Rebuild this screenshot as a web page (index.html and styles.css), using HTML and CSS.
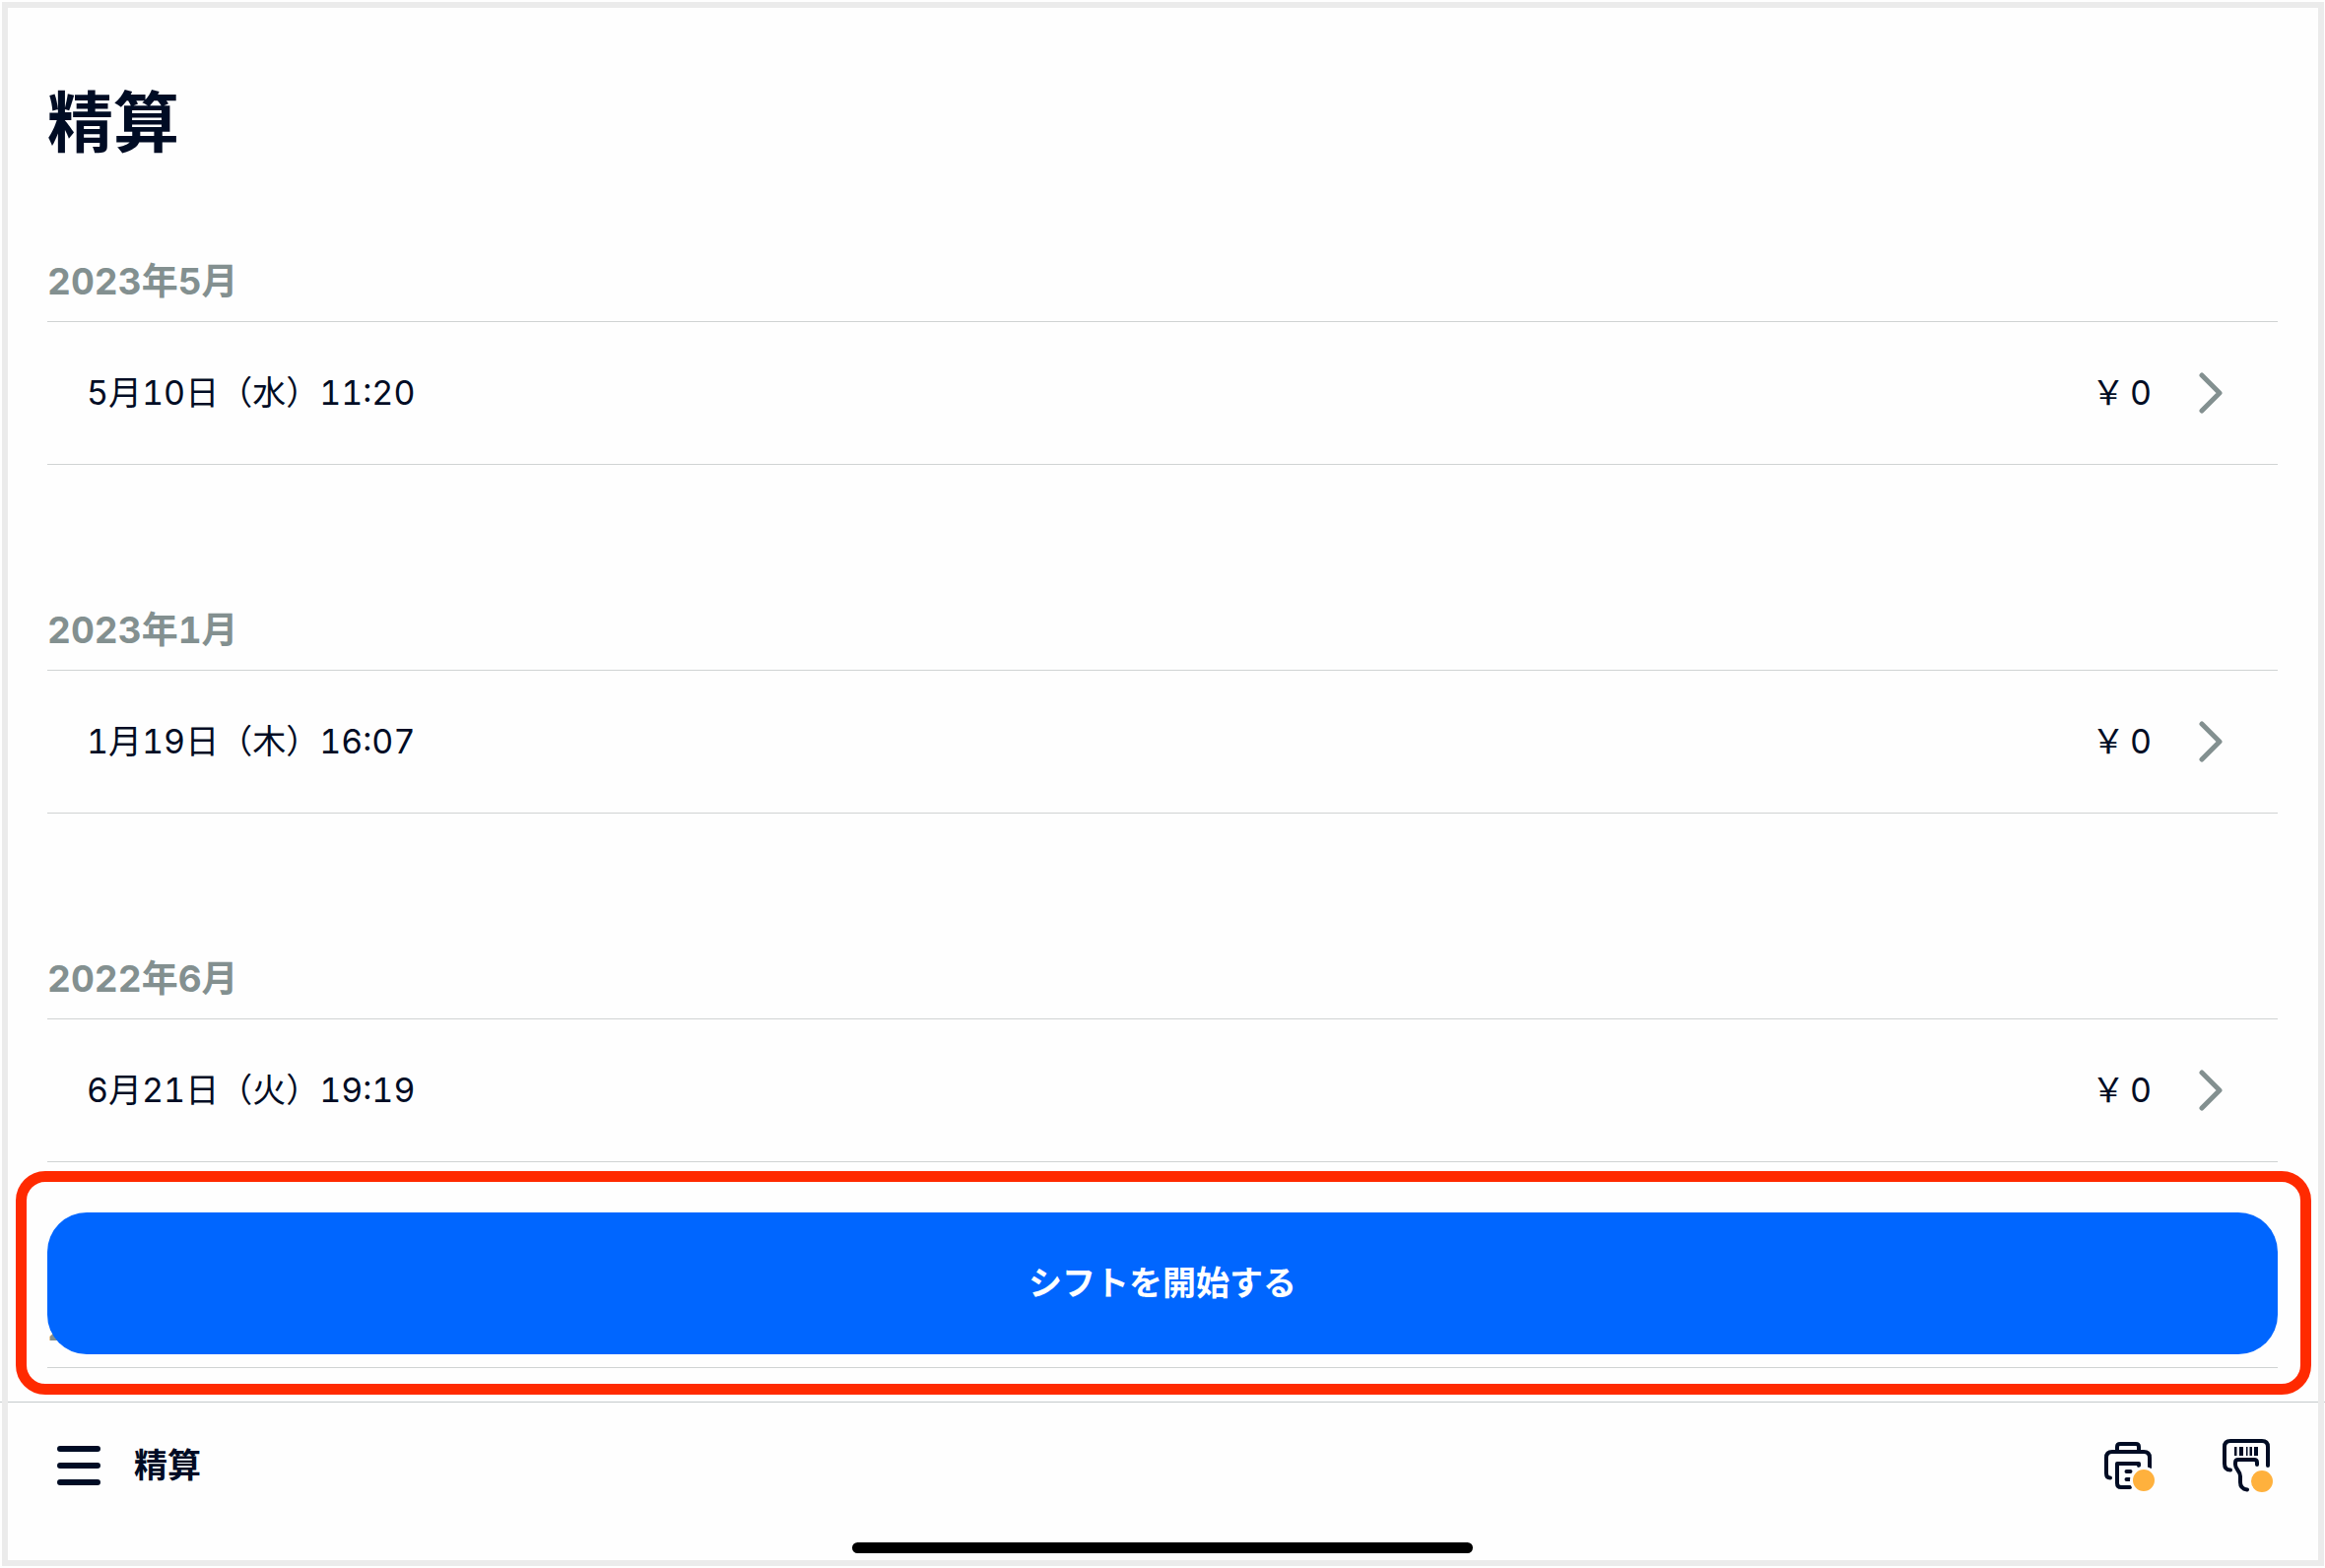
FILE: index.html
```html
<!DOCTYPE html>
<html lang="ja">
<head>
  <meta charset="UTF-8" />
  <meta name="viewport" content="width=device-width, initial-scale=1.0" />
  <title>精算</title>
  <link rel="stylesheet" href="styles.css">
</head>
<body>
  <main class="content">
    <h1>精算</h1>

    <section class="month">
      <h2>2023年5月</h2>
      <a href="#" class="row">
        <span class="date">5月10日（水）11:20</span>
        <span class="amount"><span class="yen">￥</span>0</span>
        <svg class="chevron" viewBox="0 0 24 42"><path d="M3 3l18 18L3 39"/></svg>
      </a>
    </section>

    <section class="month">
      <h2>2023年1月</h2>
      <a href="#" class="row">
        <span class="date">1月19日（木）16:07</span>
        <span class="amount"><span class="yen">￥</span>0</span>
        <svg class="chevron" viewBox="0 0 24 42"><path d="M3 3l18 18L3 39"/></svg>
      </a>
    </section>

    <section class="month">
      <h2>2022年6月</h2>
      <a href="#" class="row">
        <span class="date">6月21日（火）19:19</span>
        <span class="amount"><span class="yen">￥</span>0</span>
        <svg class="chevron" viewBox="0 0 24 42"><path d="M3 3l18 18L3 39"/></svg>
      </a>
    </section>

    <section class="month">
      <h2>2022年5月</h2>
    </section>

    <div class="highlight">
      <button class="btn-start">シフトを開始する</button>
    </div>
  </main>

  <footer class="bottom-bar">
    <button class="menu-btn">
      <svg class="menu-icon" viewBox="0 0 44 40"><path d="M3 3h38M3 20h38M3 37h38"/></svg>
      精算
    </button>

    <div class="devices">
      <button class="device-btn" aria-label="プリンター">
        <svg class="device-icon" viewBox="0 0 56 56">
          <path d="M13 13V9Q13 6 16 6H32Q35 6 35 9V13"/>
          <path d="M6 40.500Q2 40.500 2 36V20Q2 14 8 14H40Q46 14 46 20V30"/>
          <path d="M35 28V26H13V46Q13 50 17 50H26"/>
          <path d="M22.500 34h4M22.500 42h4"/>
          <circle class="status" cx="40" cy="43" r="12.500"/>
        </svg>
      </button>
      <button class="device-btn" aria-label="バーコードリーダー">
        <svg class="device-icon" viewBox="0 0 56 56">
          <path d="M8 32.500Q2 32.500 2 26V9Q2 3 8 3H40Q46 3 46 9V28"/>
          <path class="bars" d="M12 9h2.500v9H12zM17 9h4v9h-4zM24 9h1.500v9H24zM27.500 9h2.500v9h-2.500zM32 9h4v9h-4z"/>
          <path d="M35 27V25Q35 22 32 22H16Q13 22 13 25V27C13 32 18 33 18 39V45Q18 51.500 25 52.500"/>
          <circle class="status" cx="40" cy="44" r="12.500"/>
        </svg>
      </button>
    </div>
    <span class="home-indicator"></span>
  </footer>
</body>
</html>
```
FILE: styles.css
```css
* {
  box-sizing: border-box;
}

body {
  margin: 0;
  height: 100vh;
  display: flex;
  flex-direction: column;
  font-family: Inter, 'Noto Sans CJK JP', sans-serif;
  font-size: 34px;
  line-height: 48px;
  font-variant-numeric: tabular-nums;
  background-color: #fefefe;
  color: #000c24;
}

/* frame around the whole screen */
body::after {
  content: '';
  position: fixed;
  inset: 2px 1px 2px 2px;
  border: 6px solid #ebebeb;
  pointer-events: none;
}

.content {
  flex: 1;
  min-height: 0;
  position: relative;
  overflow: hidden;
  padding: 82px 48px 0;
}

h1 {
  margin: 0 0 94px;
  font-size: 67px;
  line-height: 86px;
  font-weight: 700;
}

.month {
  margin-bottom: 144px;
}

.month h2 {
  margin: 0;
  padding-bottom: 16px;
  border-bottom: 1px solid #d0d3d3;
  font-size: 37px;
  line-height: 48px;
  font-weight: 700;
  color: #839090;
}

.row {
  display: flex;
  align-items: center;
  height: 145px;
  padding: 0 56px 0 40px;
  border-bottom: 1px solid #d0d3d3;
  color: inherit;
  text-decoration: none;
}

.amount {
  margin-left: auto;
}

.yen {
  margin-right: 5px;
}

.chevron {
  width: 24px;
  height: 42px;
  margin-left: 48px;
  fill: none;
  stroke: #839090;
  stroke-width: 5;
  stroke-linecap: round;
  stroke-linejoin: round;
}

button {
  border: none;
  background: none;
  padding: 0;
  font: inherit;
  color: inherit;
  cursor: pointer;
}

.highlight {
  position: absolute;
  left: 16px;
  right: 14px;
  bottom: 7px;
  padding: 31px 23px 30px 21px;
  border: 11px solid #ff2a00;
  border-radius: 30px;
}

.btn-start {
  display: block;
  width: 100%;
  height: 144px;
  border-radius: 40px;
  background-color: #0066ff;
  color: white;
  font-weight: 600;
}

.bottom-bar {
  position: relative;
  display: flex;
  justify-content: space-between;
  align-items: flex-start;
  height: 169px;
  padding: 36px 48px 0 58px;
  border-top: 1px solid #c4c9cb;
}

.menu-btn {
  display: flex;
  align-items: center;
  gap: 34px;
  height: 56px;
  font-weight: 600;
}

.menu-icon {
  width: 44px;
  height: 40px;
  fill: none;
  stroke: currentColor;
  stroke-width: 6;
  stroke-linecap: round;
}

.devices {
  display: flex;
  gap: 64px;
}

.device-icon {
  display: block;
  width: 56px;
  height: 56px;
  fill: none;
  stroke: currentColor;
  stroke-width: 4;
  stroke-linecap: round;
  stroke-linejoin: round;
}

.device-icon .bars {
  fill: currentColor;
  stroke: none;
}

.device-icon .status {
  fill: #ffb13d;
  stroke: #fefefe;
  stroke-width: 3;
}

.home-indicator {
  position: absolute;
  left: 50%;
  bottom: 15px;
  width: 630px;
  height: 11px;
  margin-left: -315px;
  border-radius: 6px;
  background-color: black;
}
```
